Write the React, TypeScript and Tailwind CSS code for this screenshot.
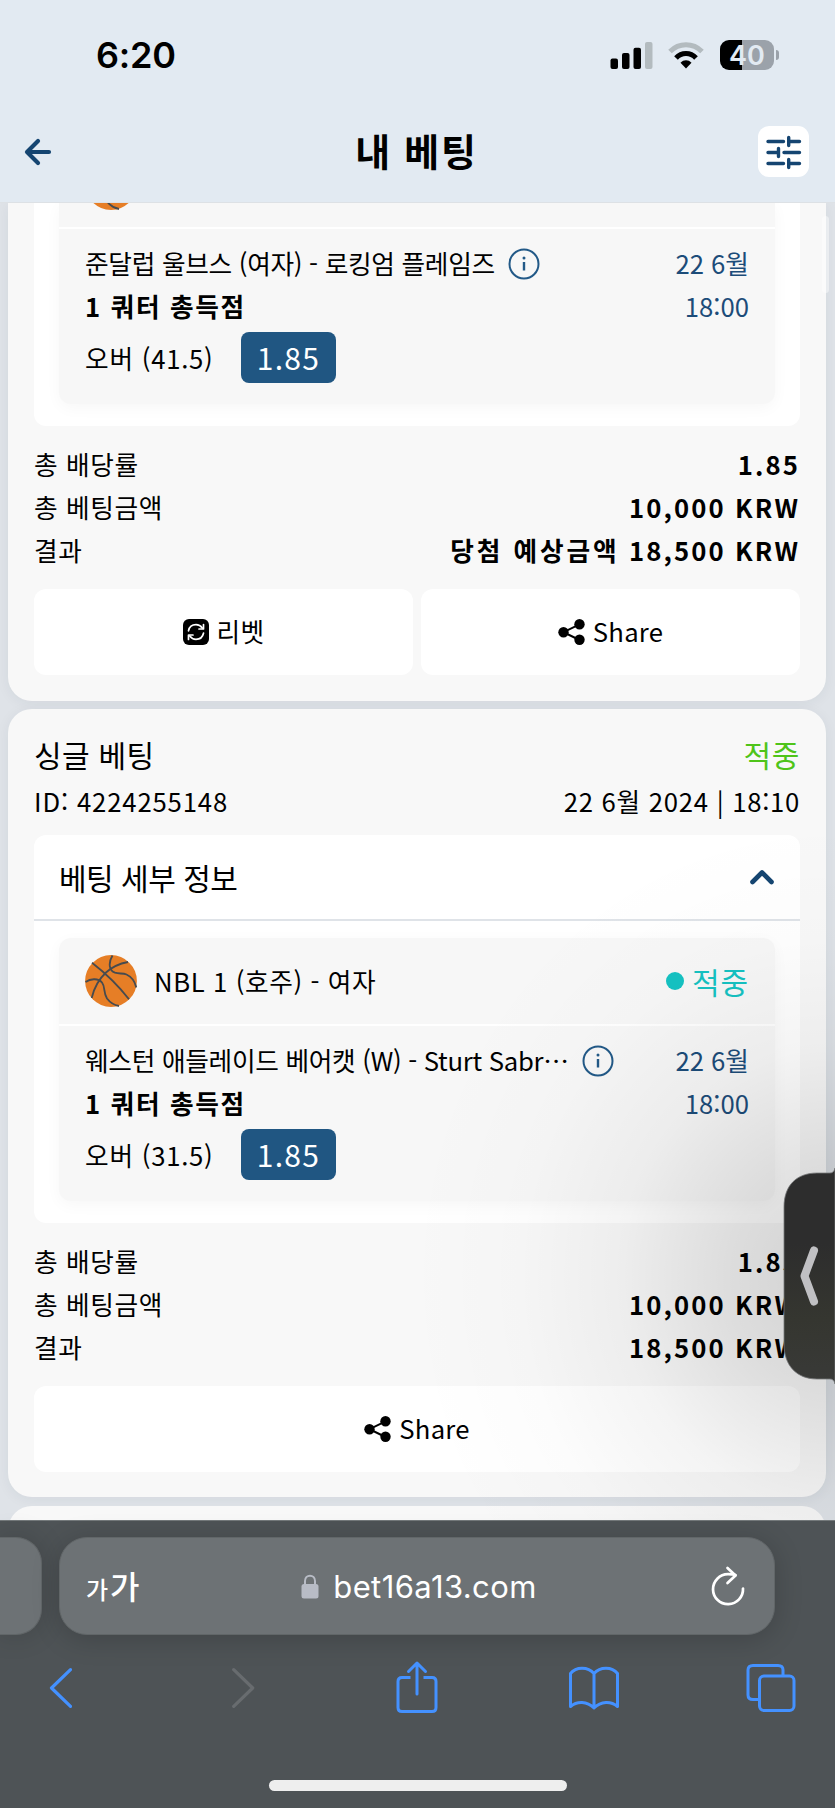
import type { ReactNode } from "react";

interface BetEventProps {
	teams: string;
	market: string;
	pick: string;
	odds: string;
	date: string;
	time: string;
}

interface TotalRow {
	label: string;
	prefix?: string;
	value: string;
}

function Basketball() {
	return (
		<svg className="h-[52px] w-[52px] shrink-0" viewBox="0 0 52 52" fill="none" stroke="#474b4f" strokeWidth={1.8}>
			<circle cx="26" cy="26" r="25.9" fill="#e67e26" stroke="none" />
			<path d="M7 7.700C19 17 33 30 44 44.300" />
			<path d="M6.700 43C9 33 14 24 21 17.500C27 12 35 8.500 43 7" />
			<path d="M27.500 0.500C23 8 24 15.500 30 17.700C34 19 38 18 41.500 19.500C47 22 50 27 51.300 32.500" />
			<path d="M0.500 27C5 24 13 22.500 17 27.500C20.500 32 18 37 22 43.500C25 47.500 29 50 34 51" />
		</svg>
	);
}

function InfoIcon() {
	return (
		<svg className="h-8 w-8 shrink-0" viewBox="0 0 32 32" fill="none" stroke="#225987" strokeWidth={2}>
			<circle cx="16" cy="16" r="14.500" />
			<path d="M16 14v8.500" strokeWidth={2.4} />
			<circle cx="16" cy="10" r="1.500" fill="#225987" stroke="none" />
		</svg>
	);
}

function ShareIcon() {
	return (
		<svg className="h-[26px] w-[27px] shrink-0" viewBox="0 0 27 26">
			<path d="M21.500 5.300L5.500 13.200L21.500 21" fill="none" stroke="#000" strokeWidth={2} />
			<circle cx="21.500" cy="5.300" r="5.200" />
			<circle cx="5.500" cy="13.200" r="5.200" />
			<circle cx="21.500" cy="20.700" r="5.200" />
		</svg>
	);
}

function RebetIcon() {
	return (
		<svg className="h-[26px] w-[26px] shrink-0" viewBox="0 0 26 26" fill="none">
			<rect width="26" height="26" rx="6" fill="#000" />
			<g stroke="#fff" strokeWidth={1.7} strokeLinecap="round" strokeLinejoin="round">
				<path d="M5.500 11.800C6.300 8 9.300 5.700 13 5.700C15.800 5.700 17.800 6.900 19.300 9" />
				<path d="M20.500 5.500V10H16" />
				<path d="M20.500 14.200C19.700 18 16.700 20.300 13 20.300C10.200 20.300 8.200 19.100 6.700 17" />
				<path d="M5.500 20.500V16H10" />
			</g>
		</svg>
	);
}

function StatusBar() {
	return (
		<div className="flex h-[110px] items-center justify-between pl-24 pr-[56px]">
			<span className="font-['Inter'] text-[36px] font-semibold leading-none tracking-[-0.200px]">6:20</span>
			<div className="flex items-center">
				<svg className="h-[27px] w-[43px]" viewBox="0 0 43 27">
					<rect x="0.500" y="16.500" width="7.500" height="10.500" rx="2" />
					<rect x="12" y="11" width="7.500" height="16" rx="2" />
					<rect x="23.500" y="5.700" width="7.500" height="21.300" rx="2" />
					<rect x="35" y="0" width="7.500" height="27" rx="2" fill="#b3bbbf" />
				</svg>
				<svg className="ml-[15px] h-[27px] w-9" viewBox="0 0 36 27" fill="none">
					<path d="M2 9.500C11 0.500 25 0.500 34 9.500" stroke="#b3bbbf" strokeWidth={5} />
					<path d="M8 16C13.500 10 22.500 10 28 16" stroke="#000" strokeWidth={5} />
					<path d="M12.500 20.800C15.500 17.500 20.500 17.500 23.500 20.800L18 26.500Z" fill="#000" />
				</svg>
				<div className="ml-4 flex h-[30px] w-[54px] items-center justify-center rounded-[9px] bg-[linear-gradient(90deg,#000_22px,#9ba2aa_22px)]">
					<span className="font-['Inter'] text-[27px] font-semibold leading-none text-[#e2eaf2]">40</span>
				</div>
				<div className="ml-[2px] h-[10px] w-[3px] rounded-r-full bg-[#9ba2aa]" />
			</div>
		</div>
	);
}

function TitleBar() {
	return (
		<div className="flex h-[84px] items-center justify-between pl-6 pr-[26px]">
			<div className="w-[51px]">
				<svg className="h-[28px] w-[28px]" viewBox="0 0 28 28" fill="none" stroke="#154571" strokeWidth={4.2} strokeLinecap="round" strokeLinejoin="round">
					<path d="M14 3L3 14L14 25M3.500 14H25" />
				</svg>
			</div>
			<h1 className="pb-1 text-[38px] font-bold leading-none tracking-[1.700px]">내 베팅</h1>
			<button className="mb-[2px] h-[51px] w-[51px] rounded-[11px] bg-white">
				<svg className="h-[51px] w-[51px]" viewBox="0 0 51 51" fill="none" stroke="#154571" strokeWidth={3.4} strokeLinecap="round">
					<path d="M10 15.500H25.500M30.700 15.500H41.500M30.700 11.500V19.500" />
					<path d="M10 26.500H20M26 26.500H41.500M20.500 22.500V30.500" />
					<path d="M10 37.500H25.500M30.700 37.500H41.500M30.700 33.500V41.500" />
				</svg>
			</button>
		</div>
	);
}

function BetEvent({ teams, market, pick, odds, date, time }: BetEventProps) {
	return (
		<div className="flex justify-between px-[26px] pb-[21px] pt-[13px]">
			<div>
				<div className="flex h-[43px] items-center gap-[13px]">
					<span className="tracking-[-0.300px]">{teams}</span>
					<InfoIcon />
				</div>
				<div className="h-[43px] font-bold leading-[42px] tracking-[1.650px]">{market}</div>
				<div className="mt-1 flex h-[51px] items-center">
					<span className="w-[156px] pt-px tracking-[0.750px]">{pick}</span>
					<span className="flex h-[51px] w-[95px] items-center justify-center rounded-lg bg-[#205682] text-[30px] leading-[51px] tracking-[1.300px] text-white">
						{odds}
					</span>
				</div>
			</div>
			<div className="text-right leading-[43px] text-[#1c4c79]">
				<div className="leading-[42px]">{date}</div>
				<div>{time}</div>
			</div>
		</div>
	);
}

function Totals({ rows }: { rows: TotalRow[] }) {
	return (
		<div className="mt-[17px] leading-[42px]">
			{rows.map(({ label, prefix, value }) => (
				<div key={label} className="flex h-[43px] justify-between">
					<span className="tracking-[0.600px]">{label}</span>
					<span className="font-bold tracking-[2.100px]">
						{prefix && <span className="tracking-[2.900px]">{prefix}</span>} {value}
					</span>
				</div>
			))}
		</div>
	);
}

function CardButton({ icon, children }: { icon: ReactNode; children: ReactNode }) {
	return (
		<button className="flex h-[86px] flex-1 items-center justify-center gap-2 rounded-xl bg-white tracking-[0.250px]">
			{icon}
			<span className="pb-px">{children}</span>
		</button>
	);
}

function BrowserBar() {
	return (
		<footer className="relative h-[288px] shrink-0 border-t border-[#74797b] bg-[#4e5356]">
			<div className="flex gap-[17px] pt-4">
				<div className="h-[98px] w-[42px] rounded-r-[26px] border border-l-0 border-[#616668] bg-[#6d7275] shadow-[0_0_28px_rgba(0,0,0,0.160)]" />
				<div className="flex h-[98px] w-[716px] items-center justify-between rounded-[28px] border border-[#616668] bg-[#6d7275] pl-[26px] pr-[29px] text-white shadow-[0_4px_28px_rgba(0,0,0,0.180)]">
					<div className="flex w-[60px] items-baseline gap-[2px] pb-[2px] font-medium leading-none">
						<span className="text-[24px]">가</span>
						<span className="text-[32px]">가</span>
					</div>
					<div className="ml-[7px] flex items-center gap-[14px]">
						<svg className="h-[25px] w-[18px]" viewBox="0 0 18 25">
							<path d="M4 12V7C4 0 14 0 14 7V12" fill="none" stroke="#b8bcc6" strokeWidth={2} />
							<rect x="0.500" y="10" width="17" height="14.500" rx="2.500" fill="#b8bcc6" />
						</svg>
						<span className="font-['Inter'] text-[31px] leading-none tracking-[0.400px]">bet16a13.com</span>
					</div>
					<div className="flex w-[60px] justify-end">
						<svg className="h-10 w-[34px]" viewBox="0 0 34 40" fill="none" stroke="#fff" strokeWidth={2.7} strokeLinecap="round" strokeLinejoin="round">
							<path d="M32 22.500A15 15 0 1 1 17 8.200C20 8.200 22.500 8.300 24.500 9" />
							<path d="M16.500 2L24.500 9.500L16.500 17" />
						</svg>
					</div>
				</div>
			</div>
			<div className="mt-[25px] flex h-[56px] items-center pl-[48px] text-[#4491ff]">
				<svg className="h-10 w-6" viewBox="0 0 24 40" fill="none" stroke="currentColor" strokeWidth={3.2} strokeLinecap="round" strokeLinejoin="round">
					<path d="M22.500 1.700L3.500 20L22.500 38.300" />
				</svg>
				<svg className="ml-40 h-10 w-6" viewBox="0 0 24 40" fill="none" stroke="#686c6f" strokeWidth={3.2} strokeLinecap="round" strokeLinejoin="round">
					<path d="M1.700 1.700L20.700 20L1.700 38.300" />
				</svg>
				<svg className="mb-[2px] ml-[139px] h-[54px] w-[44px]" viewBox="0 0 44 54" fill="none" stroke="currentColor" strokeWidth={3} strokeLinecap="round" strokeLinejoin="round">
					<path d="M15.500 17.500H7Q3 17.500 3 21.500V47.500Q3 51.500 7 51.500H37Q41 51.500 41 47.500V21.500Q41 17.500 37 17.500H28.500" strokeLinecap="butt" />
					<path d="M22 34V3M13.500 11.500L22 3L30.500 11.500" />
				</svg>
				<svg className="ml-[129px] h-[46px] w-[52px]" viewBox="0 0 52 46" fill="none" stroke="currentColor" strokeWidth={3} strokeLinecap="round" strokeLinejoin="round">
					<path d="M26 8.500C20 1.500 8 1.500 2.500 8.500V41.500C9 36 19 36 26 43C33 36 43 36 49.500 41.500V8.500C44 1.500 32 1.500 26 8.500V42.500" />
				</svg>
				<svg className="ml-[126px] h-[50px] w-[51px]" viewBox="0 0 51 50" fill="none" stroke="currentColor" strokeWidth={3}>
					<rect x="13.500" y="13" width="34.500" height="34.500" rx="4.500" />
					<path d="M13 36.500H7Q2 36.500 2 32V7Q2 2.500 7 2.500H32Q37 2.500 37 7V12" />
				</svg>
			</div>
			<div className="mx-auto mt-16 h-[11px] w-[298px] rounded-full bg-[#eee]" />
		</footer>
	);
}

export default function App() {
	return (
		<div
			lang="ko"
			className="relative flex h-[1808px] w-[835px] flex-col overflow-hidden bg-[#dfe3e8] font-['Noto_Sans_CJK_KR',sans-serif] text-[25.700px] text-black"
		>
			<header className="h-[203px] shrink-0 border-b border-[#dde1e5] bg-[#e2eaf2]">
				<StatusBar />
				<TitleBar />
			</header>

			<main className="flex-1 overflow-hidden pl-2 pr-[9px]">
				<section className="h-[498px] rounded-b-[24px] bg-[#f8f8f8] px-[26px] shadow-[0_2px_14px_rgba(40,50,70,0.060)]">
					<div className="h-[223px] rounded-b-xl bg-white px-[25px]">
						<div className="h-[201px] rounded-b-xl bg-[#f7f7f7] shadow-[0_4px_16px_rgba(0,0,0,0.035)]">
							<div className="flex h-[26px] items-end overflow-hidden border-b-2 border-white px-[26px] pb-[17px]">
								<Basketball />
							</div>
							<BetEvent
								teams="준달럽 울브스 (여자) - 로킹엄 플레임즈"
								market="1 쿼터 총득점"
								pick="오버 (41.5)"
								odds="1.85"
								date="22 6월"
								time="18:00"
							/>
						</div>
					</div>
					<Totals
						rows={[
							{ label: "총 배당률", value: "1.85" },
							{ label: "총 베팅금액", value: "10,000 KRW" },
							{ label: "결과", prefix: "당첨 예상금액", value: "18,500 KRW" },
						]}
					/>
					<div className="mt-[17px] flex gap-2">
						<CardButton icon={<RebetIcon />}>리벳</CardButton>
						<CardButton icon={<ShareIcon />}>Share</CardButton>
					</div>
				</section>

				<section className="mt-2 h-[788px] rounded-[24px] bg-[#f8f8f8] px-[26px] pt-[22px] shadow-[0_2px_14px_rgba(40,50,70,0.060)]">
					<div className="flex h-[46px] items-center justify-between text-[30px]">
						<h2 className="tracking-[0.300px]">싱글 베팅</h2>
						<span className="tracking-[0.700px] text-[#4fc41a]">적중</span>
					</div>
					<div className="mt-[3px] flex h-[43px] items-center justify-between">
						<span className="tracking-[0.850px]">ID: 4224255148</span>
						<span className="tracking-[0.720px]">22 6월 2024 | 18:10</span>
					</div>

					<div className="mt-3 h-[388px] rounded-xl bg-white">
						<div className="flex h-[86px] items-center justify-between border-b-2 border-[#dfe3e8] px-[25px]">
							<h3 className="text-[30px] tracking-[-0.500px]">베팅 세부 정보</h3>
							<svg className="h-4 w-[26px]" viewBox="0 0 26 16" fill="none" stroke="#154571" strokeWidth={4.6} strokeLinecap="round" strokeLinejoin="round">
								<path d="M3.500 13L13 3.500L22.500 13" />
							</svg>
						</div>
						<div className="mx-[25px] mt-[17px] h-[263px] rounded-xl bg-[#f7f7f7] shadow-[0_4px_16px_rgba(0,0,0,0.035)]">
							<div className="flex h-[88px] items-center border-b-2 border-white px-[26px]">
								<Basketball />
								<span className="ml-[17px] flex-1 tracking-[0.600px]">NBL 1 (호주) - 여자</span>
								<span className="mr-2 h-[18px] w-[18px] rounded-full bg-[#15c2c2]" />
								<span className="text-[30px] tracking-[0.900px] text-[#15c2c2]">적중</span>
							</div>
							<BetEvent
								teams="웨스턴 애들레이드 베어캣 (W) - Sturt Sabr…"
								market="1 쿼터 총득점"
								pick="오버 (31.5)"
								odds="1.85"
								date="22 6월"
								time="18:00"
							/>
						</div>
					</div>
					<Totals
						rows={[
							{ label: "총 배당률", value: "1.85" },
							{ label: "총 베팅금액", value: "10,000 KRW" },
							{ label: "결과", value: "18,500 KRW" },
						]}
					/>
					<div className="mt-[17px] flex">
						<CardButton icon={<ShareIcon />}>Share</CardButton>
					</div>
				</section>

				<section className="mt-[9px] h-20 rounded-t-[24px] bg-[#f8f8f8]" />
			</main>

			<BrowserBar />

			{/* scroll indicator */}
			<div className="absolute left-[822px] top-[216px] h-[77px] w-[7px] rounded-full bg-white/45" />

			{/* soft shade cast by the side handle */}
			<div className="pointer-events-none absolute left-[405px] top-[816px] h-[704px] w-[430px] bg-[radial-gradient(430px_460px_at_430px_460px,rgba(0,0,0,0.155)_0%,rgba(0,0,0,0.110)_25%,rgba(0,0,0,0.045)_50%,rgba(0,0,0,0.013)_74%,transparent_100%)]" />
			<svg className="absolute left-[783px] top-[1164px] h-[224px] w-[52px]" viewBox="0 0 52 224">
				<defs>
					<linearGradient id="handle" x1="0" y1="0" x2="0" y2="1">
						<stop offset="0.350" stopColor="#2d2d2d" />
						<stop offset="0.700" stopColor="#353630" />
						<stop offset="1" stopColor="#393a38" />
					</linearGradient>
				</defs>
				<path
					d="M52 4Q51 9 47 9H34C14 9 1 21 1 43V180C1 202 14 215 34 215H47Q51 215 52 220Z"
					fill="url(#handle)"
					stroke="#77797a"
					strokeWidth={0.8}
				/>
				<path d="M31 86.500L21.500 112L31 137.500" fill="none" stroke="#c0c0c3" strokeWidth={8} strokeLinecap="round" strokeLinejoin="round" />
			</svg>
		</div>
	);
}
